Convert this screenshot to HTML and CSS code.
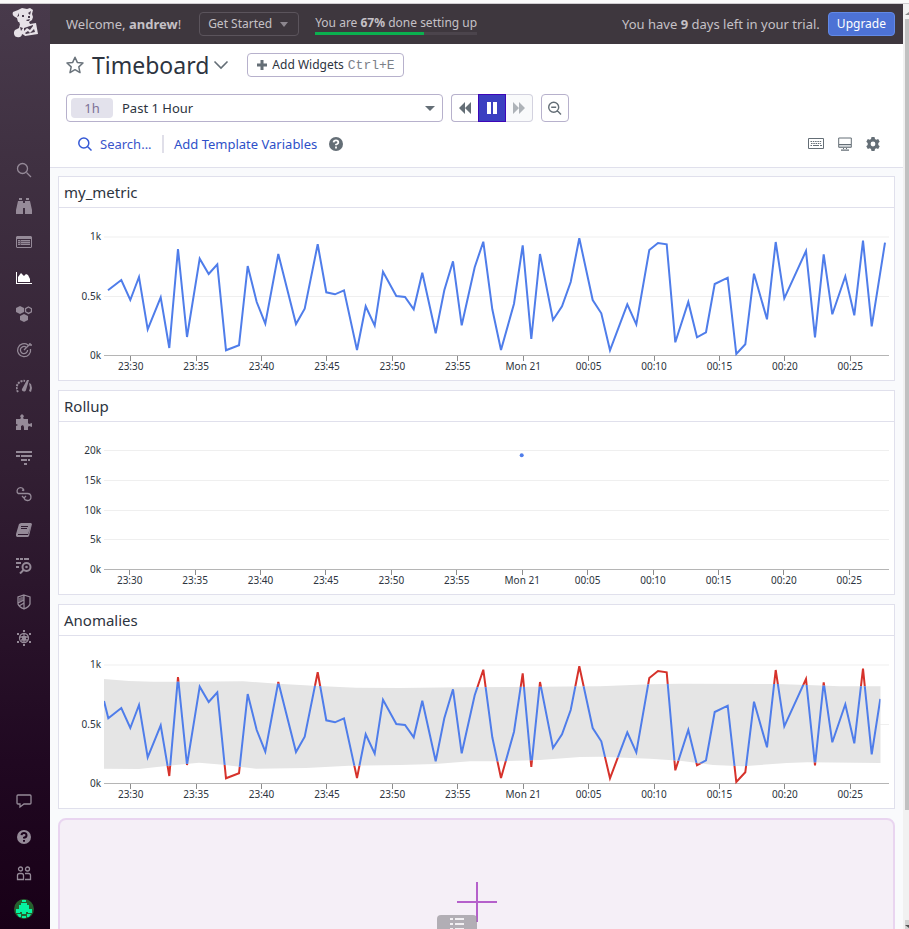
FILE: index.html
```html
<!DOCTYPE html>
<html lang="en">
<head>
<meta charset="utf-8">
<title>Timeboard</title>
<link rel="stylesheet" href="styles.css">
</head>
<body>
<div class="window-edge"></div>
<div class="app">
  <nav class="sidebar" aria-label="Main">
    <a class="logo" href="#" aria-label="Home">
      <svg width="28" height="30" viewBox="0 0 28 30"><path fill="#e6e1e7" d="M1 4c-1 2 0 4 2 5l2 1 1 4 2 2-1 4-4 2c-2 2-1 7 2 7 3 1 5-1 5-3l2 1 1 1 13-2-2-11-6 1-1-2 3-2 1-3-1-3 1-4-3-2-3 1-5-1-4 2z"/><path fill="#46394a" d="M7 5l-2 4 2-1zM19 3l-1 4-2-2zM10 7h2v2h-2zM16 8h2v2h-2zM14 12l4-1-1 2h-2zM8 19l3 1-2 3zM12 20l9-3v1l-3 4-3-2-3 3zM13 25l3-2 2 2 4-4 1 3-9 2zM5 13l1 3 2-1z"/></svg>
    </a>
    <ul class="nav-list">
      <li><a href="#" aria-label="Search"><svg viewBox="0 0 16 16"><g class="line"><circle cx="6.5" cy="6.5" r="5"/><path d="M10.5 10.5l4.5 4.500"/></g></svg></a></li>
      <li><a href="#" aria-label="Watchdog"><svg viewBox="0 0 16 16"><path d="M3 0h3v2H3zM10 0h3v2h-3zM2 3h5v13H0v-4zM9 3h5l2 9v4H9zM7 5h2v5H7z"/></svg></a></li>
      <li><a href="#" aria-label="Events"><svg viewBox="0 0 16 16"><path fill-rule="evenodd" d="M1 2h14l1 1v10l-1 1H1l-1-1V3zM1 5v8h14V5zM2 6h2v1H2zM5 6h9v1H5zM2 8h2v1H2zM5 8h9v1H5zM2 10h2v1H2zM5 10h9v1H5z"/><path d="M2 6h12v5H2z" opacity=".45"/></svg></a></li>
      <li><a class="current" href="#" aria-label="Dashboards"><svg viewBox="0 0 16 16"><path d="M0 2h1v11h15v1H0zM2 12V7l3-4 3 3 2-2 2 1 2 4v3z"/></svg></a></li>
      <li><a href="#" aria-label="Infrastructure"><svg viewBox="0 0 16 16"><path d="M4 0l4 2v4L4 8 0 6V2zM8 8l4 2v4l-4 2-4-2v-4z"/><path class="line" d="M12.500 1l3 1.700v3l-3 1.700-3-1.700v-3z"/></svg></a></li>
      <li><a href="#" aria-label="Monitors"><svg viewBox="0 0 16 16"><g class="line"><path d="M12 3A6.500 6.500 0 1 0 14.500 7M10 5A3.600 3.600 0 1 0 11.600 8M8 8l6-6"/><path d="M14 1v2h2"/></g></svg></a></li>
      <li><a href="#" aria-label="Metrics"><svg viewBox="0 0 16 16"><path d="M11 2h2l-3 10c-1 3-5 1-4-1zM13 5l2 1 1 4-1 4-2-1 1-3z"/><path class="dash" d="M2 14A7 7 0 0 1 9 3"/></svg></a></li>
      <li><a href="#" aria-label="Integrations"><svg viewBox="0 0 16 16"><path d="M0 5h4l1-1-1-2 2-2 2 2-1 2 1 1h4v4l1 1 3-1v4l-3-1-1 1v3H8v-3l-1-2-2 1v4H0v-4l2-1-2-1z"/></svg></a></li>
      <li><a href="#" aria-label="APM"><svg viewBox="0 0 16 16"><path d="M0 1h16v2H0zM0 5h4v2H0zM5 5h11v2H5zM5 9h6v2H5zM12 9h2v2h-2zM8 13h3v2H8z"/></svg></a></li>
      <li><a href="#" aria-label="CI"><svg viewBox="0 0 16 16"><path class="line" d="M2 7.500A3.500 3.500 0 1 1 8 4.500M2 7.500h9.500a3.500 3.500 0 1 1-3.500 4M8 4.500l-2-.500M6 10l2 2 2-2"/></svg></a></li>
      <li><a href="#" aria-label="Notebooks"><svg viewBox="0 0 16 16"><path fill-rule="evenodd" d="M5 1h10l1 1-3 12-1 1H1l-1-1v-2L3 2zM5 4v1h7V4zM5 6v1h6V6zM2 12v1h10l3-9-3 8z"/></svg></a></li>
      <li><a href="#" aria-label="Logs"><svg viewBox="0 0 16 16"><path d="M0 0h3v2H0zM4 0h3v2H4zM8 0h5v2H8zM0 4h5v2H0zM0 8h3v2H0z"/><circle class="thick" cx="10.500" cy="9" r="4"/><circle cx="10.500" cy="9" r="1.300"/><path class="thick" d="M7.500 12L4 15.500"/></svg></a></li>
      <li><a href="#" aria-label="Security"><svg viewBox="0 0 16 16"><path class="line" d="M8 1l6 2v7q-1 3-6 5-5-2-6-5V3zM8 1v14M2 9l6-3M3 12l5-3"/><path d="M3 4l5-2v4L3 8z" opacity=".6"/></svg></a></li>
      <li><a href="#" aria-label="Synthetics"><svg viewBox="0 0 16 16"><circle class="line" cx="8" cy="8" r="4.500"/><path class="line" d="M4 7h8M5 10h7M8 4v8"/><path d="M7 0h2v2H7zM7 14h2v2H7zM1 3h2v2H1zM13 3h2v2h-2zM1 11h2v2H1zM13 11h2v2h-2zM6 6h4v4H6z"/></svg></a></li>
    </ul>
    <ul class="nav-list nav-foot">
      <li><a href="#" aria-label="Chat"><svg viewBox="0 0 16 16"><path class="line" d="M2 2h12q1 0 1 1v7q0 1-1 1H8l-4 3v-3H2q-1 0-1-1V3q0-1 1-1z"/></svg></a></li>
      <li><a href="#" aria-label="Help"><svg viewBox="0 0 16 16"><circle cx="8" cy="8" r="7"/><path class="mark" d="M5.500 6.200Q5.700 4 8 4t2.500 2T8 8.800v.700M8 11v1.800"/></svg></a></li>
      <li><a href="#" aria-label="Team"><svg viewBox="0 0 16 16"><g class="line"><circle cx="4.500" cy="4" r="2"/><circle cx="11.500" cy="4" r="2"/><path d="M1.500 14.500v-4q0-2 2-2h2q2 0 2 2v4zM9 8.500h3.500q2 0 2 2v4H9"/></g></svg></a></li>
      <li><a href="#" aria-label="Account"><svg class="avatar" viewBox="0 0 20 20"><circle cx="10" cy="10" r="10" fill="#27602f"/><path fill="#06f2a0" d="M8 1h4v2H8zM7 4h6v2h2v4h3v4h-4v-1h-2v2H8v-2H6v1H2v-4h3V6h2zM3 15h4v3H5zM13 15h4l-2 3h-2zM8 17h4v2H8z"/></svg></a></li>
    </ul>
  </nav>

  <main class="main">
    <header class="topbar">
      <span class="welcome">Welcome, <b>andrew</b>!</span>
      <button class="get-started" type="button">Get Started <i class="caret"></i></button>
      <div class="setup">
        <span>You are <b>67%</b> done setting up</span>
        <div class="track"><div class="fill"></div></div>
      </div>
      <span class="trial">You have <b>9</b> days left in your trial.</span>
      <button class="upgrade" type="button">Upgrade</button>
    </header>

    <section class="board-head">
      <div class="row title-row">
        <button class="bare star" type="button" aria-label="Favorite"><svg width="18" height="18" viewBox="0 0 18 18"><path fill="none" stroke="#6a737b" stroke-width="1.500" stroke-linejoin="round" d="M9 1.200l2.300 5.200 5.700.600-4.200 3.900 1.200 5.700L9 13.700l-5 2.900 1.200-5.700L1 7l5.700-.600z"/></svg></button>
        <h1>Timeboard</h1>
        <button class="bare chevron" type="button" aria-label="Board menu"><svg width="16" height="10" viewBox="0 0 16 10"><path fill="none" stroke="#646e76" stroke-width="1.600" d="M1.500 1.500L8 8l6.500-6.500"/></svg></button>
        <button class="outline add-widgets" type="button"><svg width="12" height="12" viewBox="0 0 12 12"><path fill="#646e76" d="M4.500 1h3v3.500H11v3H7.500V11h-3V7.500H1v-3h3.500z"/></svg>Add Widgets <kbd>Ctrl+E</kbd></button>
      </div>
      <div class="row time-row">
        <div class="time-picker">
          <label for="range">1h</label>
          <select id="range"><option>Past 1 Hour</option></select>
          <i class="caret dark"></i>
        </div>
        <div class="playback">
          <button type="button" aria-label="Back"><svg width="14" height="12" viewBox="0 0 14 12"><path fill="#646e76" d="M7 0v12L1 6zM13 0v12L7 6z"/></svg></button>
          <button class="active" type="button" aria-label="Pause"><svg width="12" height="12" viewBox="0 0 12 12"><path fill="#fff" d="M1 0h4v12H1zM7 0h4v12H7z"/></svg></button>
          <button type="button" aria-label="Forward" disabled><svg width="14" height="12" viewBox="0 0 14 12"><path fill="#aeb3b8" d="M1 0l6 6-6 6zM7 0l6 6-6 6z"/></svg></button>
        </div>
        <button class="outline zoom-out" type="button" aria-label="Zoom out"><svg width="14" height="14" viewBox="0 0 14 14"><path fill="none" stroke="#646e76" stroke-width="1.400" d="M10.700 6.200a5 5 0 1 1-10 0 5 5 0 0 1 10 0zM9.400 9.800l3.600 3.600M3.200 6.200h5"/></svg></button>
      </div>
      <div class="row filter-row">
        <label class="search"><svg width="14" height="14" viewBox="0 0 14 14"><path fill="none" stroke="#3559d6" stroke-width="1.500" d="M10.800 6a5 5 0 1 1-10 0 5 5 0 0 1 10 0zM9.500 9.500l4 4"/></svg><input type="text" placeholder="Search..." aria-label="Search"></label>
        <a class="template" href="#">Add Template Variables</a>
        <button class="bare help" type="button" aria-label="Help"><svg width="14" height="14" viewBox="0 0 14 14"><circle cx="7" cy="7" r="7" fill="#646e76"/><path fill="none" stroke="#fff" stroke-width="1.800" d="M4.600 5.300Q4.800 3.300 7 3.300T9.300 5.100 7 7.600v.700M7 9.600v1.800"/></svg></button>
        <div class="tools">
          <button class="bare" type="button" aria-label="Keyboard shortcuts"><svg width="16" height="12" viewBox="0 0 16 12"><path fill="none" stroke="#646e76" d="M.500.500h15v10H.500z"/><path fill="none" stroke="#646e76" stroke-dasharray="1.500 .800" d="M2.500 3.500h11M3 5.500h10M2.500 7.500h2"/><path fill="#646e76" d="M5 7h6v1H5zM12 7h2v1h-2z"/></svg></button>
          <button class="bare" type="button" aria-label="TV mode"><svg width="14" height="14" viewBox="0 0 14 14"><path fill="#d5d9dc" d="M1 8h12v2H1z"/><path fill="none" stroke="#646e76" d="M.700 1h12.600v9.300H.700zM1 7.500h12"/><path fill="#646e76" d="M5 11h1v1H5zM8 11h1v1H8zM3 12.500h8v1.200H3z"/></svg></button>
          <button class="bare" type="button" aria-label="Settings"><svg width="14" height="14" viewBox="0 0 14 14"><path fill="#646e76" fill-rule="evenodd" d="M5.500 0h3l.500 2 1.200.700 2-.600 1.500 2.600L12.300 6v2l1.400 1.300-1.500 2.600-2-.600-1.200.700-.500 2h-3L5 12l-1.200-.700-2 .600L.300 9.300 1.700 8V6L.300 4.700l1.500-2.600 2 .600L5 2zM7 4.600a2.400 2.400 0 1 0 0 4.800 2.400 2.400 0 0 0 0-4.800z"/></svg></button>
        </div>
      </div>
    </section>

    <section class="widgets">
      <article class="card">
        <h2>my_metric</h2>
        <div class="chart">
          <div class="y-axis"><span>1k</span><span>0.5k</span><span>0k</span></div>
          <svg class="plot" viewBox="104 236 785 120" preserveAspectRatio="none">
            <path class="grid-line" d="M104 237H889M104 296.500H889"/><path class="base-line" d="M104 355.500H889"/>
            <polyline class="series" points="108,290.300 121.300,280 130.300,300 139,277 147.700,329.300 160.700,297.300 169.300,348 178,249 187,337 199.700,258.700 208.700,274 217.300,264.300 226,350.300 239,345.300 247.700,266 256.700,302 265.300,323.700 278.300,254 296,324 304.700,308.700 317.700,244.300 326.300,292.300 335,294.300 344,290.300 357,350 365.700,306.300 374.700,325.700 383,271.700 396.300,296 405,297 413.700,309.300 422.300,272.700 435.700,333.300 444.300,290.300 453,261.300 461.700,325.300 474.700,267.300 483.300,241.700 492.300,309.300 501,350 514,303.700 522.700,245.300 531.300,339 540,254 553,320 562,306.300 570.700,282 579.300,238.300 592.700,300 601.300,313.300 610,350.300 627.300,304.300 636.300,324.300 649.300,250 658,243 666.700,244.300 675.300,342.300 688.300,302 697,337.300 706,332.300 714.700,284 727.700,277.700 736.300,354 745.300,344.300 754,273.700 767,319.300 775.700,242 784.300,298.300 806,251 815,337.300 823.700,254.300 832.300,314.300 845.300,276.300 854.300,315.300 863,240.700 871.700,326.300 885,242.700"/>
          </svg>
          <div class="x-axis"><span>23:30</span><span>23:35</span><span>23:40</span><span>23:45</span><span>23:50</span><span>23:55</span><span>Mon 21</span><span>00:05</span><span>00:10</span><span>00:15</span><span>00:20</span><span>00:25</span></div>
        </div>
      </article>

      <article class="card">
        <h2>Rollup</h2>
        <div class="chart">
          <div class="y-axis"><span>20k</span><span>15k</span><span>10k</span><span>5k</span><span>0k</span></div>
          <svg class="plot" viewBox="104 450 785 120" preserveAspectRatio="none">
            <path class="grid-line" d="M104 450.500H889M104 480.500H889M104 510.500H889M104 539.500H889"/><path class="base-line" d="M104 569.500H889"/>
            <path class="dot" d="M521.700 455.300h.010"/>
          </svg>
          <div class="x-axis early"><span>23:30</span><span>23:35</span><span>23:40</span><span>23:45</span><span>23:50</span><span>23:55</span><span>Mon 21</span><span>00:05</span><span>00:10</span><span>00:15</span><span>00:20</span><span>00:25</span></div>
        </div>
      </article>

      <article class="card">
        <h2>Anomalies</h2>
        <div class="chart">
          <div class="y-axis"><span>1k</span><span>0.5k</span><span>0k</span></div>
          <svg class="plot" viewBox="104 236 785 120" preserveAspectRatio="none">
            <defs>
              <path id="band" d="M104 251L129 253 153 253.700 189 253.700 243 253.300 278 255.700 318 258 356 259.700 400 260 460 259.300 540 258.700 600 258.300 650 256.300 680 255.700 777 256 807 257 840 258.300 880.500 258.300V335L807 334.300 787 335 743 338.300 713 337 680 332.700 650 330.700 600 328.700 580 329 540 332 500 333.300 470 333.300 435 336 400 337 349 337.700 306 340 256 340.700 223 336.700 199 334.700 173 337.300 139 341 104 340.700z"/>
              <clipPath id="inside"><use href="#band"/></clipPath>
              <clipPath id="outside"><path clip-rule="evenodd" d="M104 220H881V370H104zM104 251L129 253 153 253.700 189 253.700 243 253.300 278 255.700 318 258 356 259.700 400 260 460 259.300 540 258.700 600 258.300 650 256.300 680 255.700 777 256 807 257 840 258.300 881 258.300V335L807 334.300 787 335 743 338.300 713 337 680 332.700 650 330.700 600 328.700 580 329 540 332 500 333.300 470 333.300 435 336 400 337 349 337.700 306 340 256 340.700 223 336.700 199 334.700 173 337.300 139 341 104 340.700z"/></clipPath>
              <polyline id="values" vector-effect="non-scaling-stroke" points="104,273 108.300,290.300 121.300,280 130.300,300 139,277 147.700,329.300 160.700,297.300 169.300,348 178,249 187,337 199.700,258.700 208.700,274 217.300,264.300 226,350.300 239,345.300 247.700,266 256.700,302 265.300,323.700 278.300,254 296,324 304.700,308.700 317.700,244.300 326.300,292.300 335,294.300 344,290.300 357,350 365.700,306.300 374.700,325.700 383,271.700 396.300,296 405,297 413.700,309.300 422.300,272.700 435.700,333.300 444.300,290.300 453,261.300 461.700,325.300 474.700,267.300 483.300,241.700 492.300,309.300 501,350 514,303.700 522.700,245.300 531.300,339 540,254 553,320 562,306.300 570.700,282 579.300,238.300 592.700,300 601.300,313.300 610,350.300 627.300,304.300 636.300,324.300 649.300,250 658,243 666.700,244.300 675.300,342.300 688.300,302 697,337.300 706,332.300 714.700,284 727.700,277.700 736.300,354 745.300,344.300 754,273.700 767,319.300 775.700,242 784.300,298.300 806,251 815,337.300 823.700,254.300 832.300,314.300 845.300,276.300 854.300,315.300 863,240.700 871.700,326.300 880.300,271"/>
            </defs>
            <path class="grid-line" d="M104 237H889M104 296.500H889"/><path class="base-line" d="M104 355.500H889"/>
            <use href="#band" class="band"/>
            <g clip-path="url(#outside)"><use href="#values" class="series alert"/></g>
            <g clip-path="url(#inside)"><use href="#values" class="series"/></g>
          </svg>
          <div class="x-axis"><span>23:30</span><span>23:35</span><span>23:40</span><span>23:45</span><span>23:50</span><span>23:55</span><span>Mon 21</span><span>00:05</span><span>00:10</span><span>00:15</span><span>00:20</span><span>00:25</span></div>
        </div>
      </article>

      <button class="add-box" type="button" aria-label="Add a widget"><svg width="40" height="40" viewBox="0 0 40 40"><path fill="#b560cb" d="M19 0h2v40h-2zM0 19h40v2H0z"/></svg></button>
    </section>
    <button class="list-tab" type="button" aria-label="Widget list"><svg width="14" height="14" viewBox="0 0 14 14"><path fill="#f2f0f3" d="M0 1h3v2H0zM5 1h9v2H5zM0 6h3v2H0zM5 6h9v2H5zM0 11h3v2H0zM5 11h9v2H5z"/></svg></button>
  </main>

  <div class="scrollbar" aria-hidden="true">
    <div class="arrow"><svg width="4" height="3" viewBox="0 0 4 3"><path fill="#8a8a8a" d="M0 3l4-3v3z"/></svg></div>
    <div class="thumb"></div>
    <div class="arrow down"><svg width="4" height="3" viewBox="0 0 4 3"><path fill="#505050" d="M0 0h4v3z"/></svg></div>
  </div>
</div>
</body>
</html>
```
FILE: styles.css
```css
* { box-sizing: border-box; }

body {
  margin: 0;
  height: 100vh;
  display: flex;
  flex-direction: column;
  overflow: hidden;
  font: 13px/18px "Noto Sans", "Open Sans", sans-serif;
  color: #2d3440;
  background: #f9fafc;
}

button { font: inherit; color: inherit; padding: 0; margin: 0; }
svg { display: block; flex: none; }

.window-edge {
  flex: none;
  height: 4px;
  background: #fafafa;
  border-bottom: 1px solid #cfccd0;
}

.app { flex: 1; display: flex; min-height: 0; }

/* Sidebar */
.sidebar {
  flex: none;
  width: 50px;
  display: flex;
  flex-direction: column;
  padding: 4px 2px 2px 0;
  background: linear-gradient(#483a4b, #3f3041 18%, #321f33 50%, #200821 82%, #180017);
}
.logo { display: flex; padding-left: 12px; height: 144px; }
.nav-list { list-style: none; margin: 0; padding: 0; }
.nav-foot { margin-top: auto; }
.nav-list a {
  display: flex;
  align-items: center;
  justify-content: center;
  height: 36px;
  color: #958a98;
}
.nav-list a.current { color: #fff; }
.nav-list svg { width: 16px; height: 16px; fill: currentColor; }
.nav-list svg.avatar { width: 20px; height: 20px; }
.nav-list .line { fill: none; stroke: currentColor; stroke-width: 1.3; }
.nav-list .thick { fill: none; stroke: currentColor; stroke-width: 2; }
.nav-list .dash { fill: none; stroke: currentColor; stroke-width: 2; stroke-dasharray: 2 1; }
.nav-list .mark { fill: none; stroke: #1c031c; stroke-width: 2; }

/* Main column */
.main {
  flex: 1;
  min-width: 0;
  position: relative;
  display: flex;
  flex-direction: column;
  overflow: hidden;
}

.topbar {
  flex: none;
  display: flex;
  align-items: center;
  height: 40px;
  padding: 0 8px 0 16px;
  background: #3e373e;
  color: #c5c1c6;
  white-space: nowrap;
}
.get-started {
  display: flex;
  align-items: center;
  gap: 8px;
  height: 24px;
  margin-left: 18px;
  padding: 0 10px 0 8px;
  font-size: 12px;
  background: none;
  border: 1px solid #5b545c;
  border-radius: 4px;
}
.caret {
  width: 0;
  height: 0;
  border: 4px solid transparent;
  border-top: 5px solid #8d878f;
  border-bottom: 0;
}
.caret.dark { border-width: 5px 5px 0; border-top-color: #646e76; }
.setup { margin-left: 16px; font-size: 12px; }
.setup span { display: block; }
.track { height: 3px; background: #4b444c; }
.fill { width: 67%; height: 3px; background: #0bb04f; }
.trial { margin-left: auto; }
.upgrade {
  height: 24px;
  margin-left: 8px;
  padding: 0 8px;
  font-size: 12px;
  color: #fff;
  background: #4d72d5;
  border: 1px solid #6289e6;
  border-radius: 4px;
}

/* Board header */
.board-head {
  flex: none;
  padding: 0 16px;
  background: #fff;
  border-bottom: 1px solid #e0e0ec;
}
.row { display: flex; align-items: center; }
.bare { display: flex; background: none; border: 0; }
.outline {
  display: flex;
  align-items: center;
  background: #fff;
  border: 1px solid #b7b1cc;
  border-radius: 4px;
}
.title-row { height: 42px; }
h1 { margin: 0 4px 0 8px; font-size: 23px; line-height: 32px; font-weight: 400; }
.add-widgets {
  gap: 4px;
  height: 24px;
  margin-left: 18px;
  padding: 0 8px;
  font-size: 12px;
}
kbd { font: 13px "Liberation Mono", monospace; color: #7b8189; }

.time-row { height: 44px; gap: 8px; }
.time-picker {
  flex: 0 1 377px;
  display: flex;
  align-items: center;
  height: 28px;
  padding: 0 7px 0 4px;
  border: 1px solid #b7b1cc;
  border-radius: 4px;
}
.time-picker label {
  flex: none;
  width: 42px;
  height: 20px;
  line-height: 20px;
  text-align: center;
  color: #7d7196;
  background: #e3e2ec;
  border-radius: 4px;
}
.time-picker select {
  flex: 1;
  min-width: 0;
  padding: 0 9px;
  appearance: none;
  font: inherit;
  color: inherit;
  background: none;
  border: 0;
}
.playback {
  display: flex;
  height: 28px;
}
.playback button {
  display: flex;
  align-items: center;
  justify-content: center;
  width: 28px;
  background: #fff;
  border: 1px solid #b7b1cc;
}
.playback button:first-child { border-right: 0; border-radius: 4px 0 0 4px; width: 27px; }
.playback button:last-child { border-left: 0; border-radius: 0 4px 4px 0; width: 27px; background: #f9fafb; border-color: #d3d2df; }
.playback button.active { background: #3b3fc1; border-color: #3d06b8; }
.zoom-out { width: 28px; height: 28px; justify-content: center; }

.filter-row { height: 37px; padding: 0 7px 14px 12px; align-items: flex-end; }
.filter-row > * { height: 18px; align-items: center; }
.search {
  display: flex;
  gap: 8px;
  width: 86px;
  border-right: 2px solid #e0dfe9;
}
.search input {
  min-width: 0;
  width: 56px;
  padding: 0;
  font: inherit;
  background: none;
  border: 0;
}
.search input::placeholder { color: #3a55cb; opacity: 1; }
.template { margin-left: 10px; color: #2e50c8; text-decoration: none; }
.help { margin-left: 12px; }
.tools { display: flex; gap: 14px; margin-left: auto; }

/* Widgets */
.widgets {
  display: flex;
  flex-direction: column;
  gap: 9px;
  padding: 8px;
}
.card { flex: none; background: #fff; border: 1px solid #e0e0ec; }
h2 {
  margin: 0;
  padding: 4px 5px;
  height: 31px;
  font-size: 15px;
  line-height: 22px;
  font-weight: 400;
  border-bottom: 1px solid #e0e0ec;
}
.chart {
  display: grid;
  grid-template-columns: 42px 1fr;
  column-gap: 3px;
  padding: 28px 5px 8px 0;
  font-size: 10px;
  line-height: 12px;
}
.y-axis {
  display: flex;
  flex-direction: column;
  justify-content: space-between;
  margin: -6px 0 -5px;
  text-align: right;
}
.plot { width: 100%; height: 120px; overflow: visible; }
.plot path, .plot polyline { vector-effect: non-scaling-stroke; }
.grid-line { fill: none; stroke: #efefef; }
.base-line { fill: none; stroke: #b5b5b5; }
.series { fill: none; stroke: #4f7dea; stroke-width: 2; }
.series.alert { stroke: #d6322b; }
.dot { fill: none; stroke: #4f7dea; stroke-width: 4; stroke-linecap: round; }
.band { fill: #e5e5e5; }
.x-axis {
  grid-column: 1 / -1;
  display: grid;
  grid-template-columns: repeat(12, 1fr);
  margin: 0 6px 0 39px;
  text-align: center;
}
.x-axis.early { margin: 0 7px 0 38px; }
.x-axis span { white-space: nowrap; }
.x-axis span::before {
  content: "";
  display: block;
  width: 1px;
  height: 5px;
  margin: 0 auto -1px;
  background: #8c8c8c;
}

.add-box {
  flex: none;
  display: flex;
  align-items: center;
  justify-content: center;
  height: 168px;
  background: #f5eff7;
  border: 2px solid #e9d5f0;
  border-radius: 8px;
}
.list-tab {
  position: absolute;
  right: 50%;
  bottom: 0;
  width: 40px;
  height: 14px;
  display: flex;
  justify-content: center;
  padding-top: 2px;
  overflow: hidden;
  background: rgba(150, 147, 153, 0.7);
  border: 0;
  border-radius: 4px 4px 0 0;
}

/* Scrollbar gutter */
.scrollbar {
  flex: none;
  width: 6px;
  display: flex;
  flex-direction: column;
  padding-left: 2px;
  background: #f1f1f1;
}
.arrow { height: 15px; padding-top: 8px; }
.thumb { flex: 0 1 85.5%; background: #c1c1c1; }
.arrow.down { height: 9px; margin-top: auto; padding-top: 5px; background: #d2d2d2; }
```
